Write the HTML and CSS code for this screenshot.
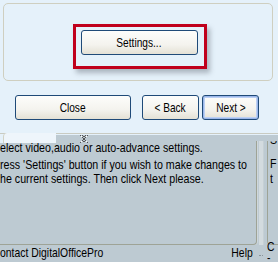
FILE: index.html
```html
<!DOCTYPE html>
<html>
<head>
<meta charset="utf-8">
<link rel="stylesheet" href="styles.css">
</head>
<body>
<div class="top">
  <div class="frame">
    <div class="focus">
      <button class="btn settings"><span class="t">Settings...</span></button>
    </div>
  </div>
  <div class="nav">
    <button class="btn close"><span class="t">Close</span></button>
    <button class="btn back"><span class="t">&lt; Back</span></button>
    <button class="btn next"><span class="t">Next &gt;</span></button>
  </div>
</div>
<div class="lower">
  <div class="seam">
    <div class="ghost"></div>
    <div class="rest"></div>
  </div>
  <svg class="cursor" width="8" height="8" viewBox="0 0 8 8">
    <rect x="0" y="0" width="1" height="1" fill="#555"/><rect x="2" y="0" width="1" height="1" fill="#555"/><rect x="5" y="0" width="1" height="1" fill="#555"/><rect x="7" y="0" width="1" height="1" fill="#555"/>
    <rect x="1" y="1" width="1" height="1" fill="#fff"/><rect x="6" y="1" width="1" height="1" fill="#fff"/><rect x="3" y="1" width="1" height="1" fill="#555"/><rect x="4" y="1" width="1" height="1" fill="#555"/>
    <rect x="2" y="2" width="1" height="1" fill="#555"/><rect x="5" y="2" width="1" height="1" fill="#555"/>
    <rect x="3" y="3" width="2" height="2" fill="#555"/>
    <rect x="2" y="5" width="1" height="1" fill="#555"/><rect x="5" y="5" width="1" height="1" fill="#555"/>
    <rect x="1" y="6" width="1" height="1" fill="#fff"/><rect x="6" y="6" width="1" height="1" fill="#fff"/><rect x="3" y="6" width="1" height="1" fill="#555"/><rect x="4" y="6" width="1" height="1" fill="#555"/>
    <rect x="0" y="7" width="1" height="1" fill="#555"/><rect x="7" y="7" width="1" height="1" fill="#555"/>
  </svg>
  <div class="content">
    <div class="main">
      <p class="line first">elect video,audio or auto-advance settings.</p>
      <p class="line">ress 'Settings' button if you wish to make changes to</p>
      <p class="line">he current settings. Then click Next please.</p>
    </div>
    <div class="sep"></div>
    <div class="side">
      <p class="sline s1">S</p>
      <p class="sline s2">F</p>
      <p class="sline s3">t</p>
    </div>
  </div>
  <div class="footer">
    <div class="foot-main">
      <span class="contact">ontact DigitalOfficePro</span>
      <span class="help">Help</span>
    </div>
    <div class="grip"></div>
    <div class="foot-side"><span class="c">C</span><span class="d">-</span></div>
  </div>
</div>
</body>
</html>
```
FILE: styles.css
```css
html, body {
  margin: 0;
  padding: 0;
}
body {
  width: 278px;
  height: 262px;
  overflow: hidden;
  font-family: "Liberation Sans", Arial, sans-serif;
  font-size: 13px;
  color: #000;
  background: #bdcad2;
  position: relative;
}
.top {
  background: #e5f1fa;
  padding: 3px 5px 0 3px;
  height: 130px;
}
.frame {
  border: 1px solid #cfcfc0;
  border-radius: 5px;
  display: flex;
  justify-content: center;
  padding-top: 20px;
  padding-left: 3px;
  box-sizing: border-box;
  height: 78px;
}
.focus {
  border: 3px solid #c0001c;
  padding: 3px 6px 4px 5px;
  height: 32px;
  box-shadow: 3px 4px 5px rgba(60, 70, 80, 0.35);
}
.btn {
  font-family: inherit;
  font-size: 13px;
  color: #000;
  height: 25px;
  border: 1px solid #1f4a78;
  border-radius: 3px;
  background: linear-gradient(#fdfdfb 0%, #f4f3ee 60%, #e4e1d5 100%);
  padding: 0;
  margin: 0;
  box-sizing: border-box;
  display: flex;
  align-items: center;
  justify-content: center;
}
.t {
  display: inline-block;
  white-space: nowrap;
  transform: scaleX(0.78);
}
.settings {
  width: 117px;
}
.nav {
  display: flex;
  margin-top: 14px;
  padding-left: 12px;
}
.close {
  width: 116px;
  margin-right: 11px;
}
.back {
  width: 57px;
  margin-right: 3px;
}
.next {
  width: 57px;
  box-shadow: inset 0 0 0 1px #9bb7ea, inset 0 0 0 2px #bcd0f3;
}
.lower {
  position: relative;
  border-top: 1px solid #c9cbc2;
}
.seam {
  display: flex;
  height: 9px;
  background: #e5f1fa;
}
.ghost {
  width: 52px;
  margin-left: 3px;
  border-left: 1px solid #d2d2c4;
  border-top-left-radius: 4px;
  background: #eef5fb;
  margin-top: -1px;
}
.rest {
  flex: 1;
  margin-top: 1px;
  background: #bdcad2;
}
.cursor {
  position: absolute;
  left: 80px;
  top: 1px;
}
.content {
  display: flex;
  height: 104px;
  margin-top: -2px;
}
.main {
  width: 256px;
  border-right: 1px solid #9ea396;
  border-bottom: 1px solid #9ea396;
  border-bottom-right-radius: 4px;
  box-shadow: 1px 0 0 #cfd7db;
}
.line {
  margin: 0;
  line-height: 14px;
  white-space: nowrap;
  transform: scaleX(0.82);
  transform-origin: left center;
}
.first {
  margin-bottom: 3px;
}
.sep {
  width: 4px;
  margin-left: 2px;
  background: #d3dbdf;
  border-right: 1px solid #c6d0d5;
}
.side {
  flex: 1;
  margin-left: 3px;
  border-left: 1px solid #9ea396;
  border-bottom-left-radius: 4px;
  border-bottom: 1px solid #9ea396;
  padding-left: 2px;
  overflow: hidden;
}
.sline {
  margin: 0;
  line-height: 14px;
  transform: scaleX(0.82);
  transform-origin: left center;
}
.s1 {
  margin-top: -8px;
  margin-bottom: 10px;
}
.s3 {
  margin-top: 1px;
}
.footer {
  display: flex;
  height: 20px;
}
.foot-main {
  width: 257px;
  display: flex;
  justify-content: space-between;
  padding-right: 4px;
  box-sizing: border-box;
  line-height: 14px;
  padding-top: 1px;
}
.contact {
  display: inline-block;
  white-space: nowrap;
  transform: scaleX(0.8);
  transform-origin: left center;
}
.help {
  display: inline-block;
  transform: scaleX(0.8);
  transform-origin: right center;
}
.grip {
  width: 4px;
  margin: 10px 2px 0 2px;
  border-top: 1px dotted #8a949a;
  height: 0;
}
.foot-side {
  display: flex;
  flex-direction: column;
  line-height: 11px;
  padding-left: 2px;
  margin-top: -4px;
}
.foot-side span {
  display: inline-block;
  transform: scaleX(0.8);
  transform-origin: left center;
}
```
